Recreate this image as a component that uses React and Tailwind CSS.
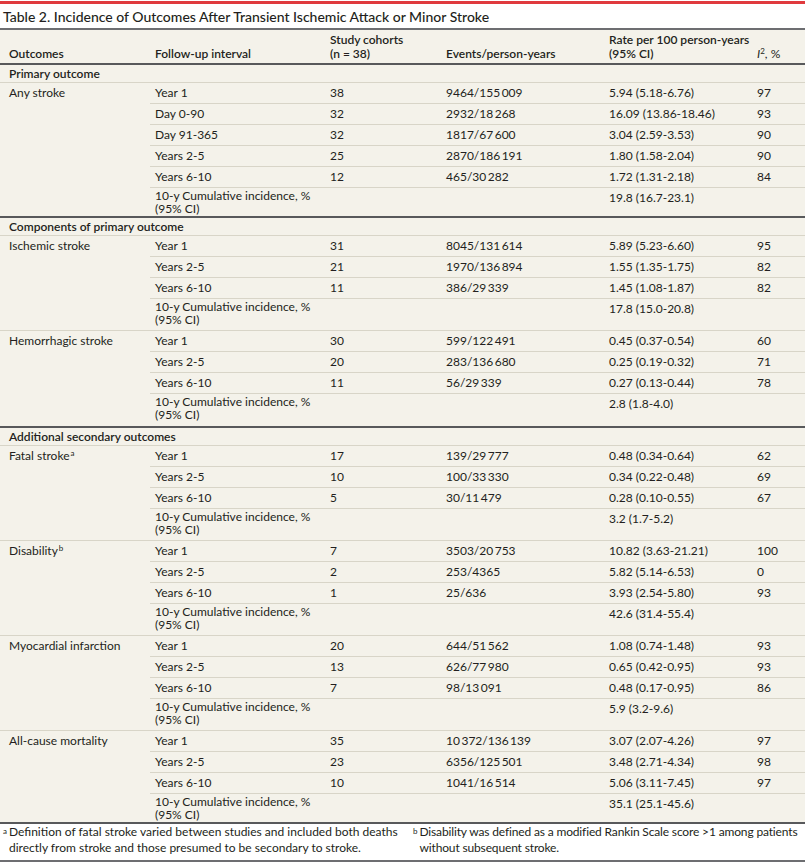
import React from "react";

const T = "\u2009";
const sections = [
  {
    title: "Primary outcome",
    groups: [
      {
        label: "Any stroke",
        cumH: "h-[28px]",
        rows: [
          ["Year 1", "38", `9464/155${T}009`, "5.94 (5.18-6.76)", "97"],
          ["Day 0-90", "32", `2932/18${T}268`, "16.09 (13.86-18.46)", "93"],
          ["Day 91-365", "32", `1817/67${T}600`, "3.04 (2.59-3.53)", "90"],
          ["Years 2-5", "25", `2870/186${T}191`, "1.80 (1.58-2.04)", "90"],
          ["Years 6-10", "12", `465/30${T}282`, "1.72 (1.31-2.18)", "84"],
        ],
        cum: "19.8 (16.7-23.1)",
      },
    ],
  },
  {
    title: "Components of primary outcome",
    groups: [
      {
        label: "Ischemic stroke",
        cumH: "h-[31px]",
        rows: [
          ["Year 1", "31", `8045/131${T}614`, "5.89 (5.23-6.60)", "95"],
          ["Years 2-5", "21", `1970/136${T}894`, "1.55 (1.35-1.75)", "82"],
          ["Years 6-10", "11", `386/29${T}339`, "1.45 (1.08-1.87)", "82"],
        ],
        cum: "17.8 (15.0-20.8)",
      },
      {
        label: "Hemorrhagic stroke",
        cumH: "h-[32px]",
        rows: [
          ["Year 1", "30", `599/122${T}491`, "0.45 (0.37-0.54)", "60"],
          ["Years 2-5", "20", `283/136${T}680`, "0.25 (0.19-0.32)", "71"],
          ["Years 6-10", "11", `56/29${T}339`, "0.27 (0.13-0.44)", "78"],
        ],
        cum: "2.8 (1.8-4.0)",
      },
    ],
  },
  {
    title: "Additional secondary outcomes",
    groups: [
      {
        label: "Fatal stroke",
        sup: "a",
        cumH: "h-[31px]",
        rows: [
          ["Year 1", "17", `139/29${T}777`, "0.48 (0.34-0.64)", "62"],
          ["Years 2-5", "10", `100/33${T}330`, "0.34 (0.22-0.48)", "69"],
          ["Years 6-10", "5", `30/11${T}479`, "0.28 (0.10-0.55)", "67"],
        ],
        cum: "3.2 (1.7-5.2)",
      },
      {
        label: "Disability",
        sup: "b",
        cumH: "h-[31px]",
        rows: [
          ["Year 1", "7", `3503/20${T}753`, "10.82 (3.63-21.21)", "100"],
          ["Years 2-5", "2", "253/4365", "5.82 (5.14-6.53)", "0"],
          ["Years 6-10", "1", "25/636", "3.93 (2.54-5.80)", "93"],
        ],
        cum: "42.6 (31.4-55.4)",
      },
      {
        label: "Myocardial infarction",
        cumH: "h-[31px]",
        rows: [
          ["Year 1", "20", `644/51${T}562`, "1.08 (0.74-1.48)", "93"],
          ["Years 2-5", "13", `626/77${T}980`, "0.65 (0.42-0.95)", "93"],
          ["Years 6-10", "7", `98/13${T}091`, "0.48 (0.17-0.95)", "86"],
        ],
        cum: "5.9 (3.2-9.6)",
      },
      {
        label: "All-cause mortality",
        cumH: "h-[28px]",
        rows: [
          ["Year 1", "35", `10${T}372/136${T}139`, "3.07 (2.07-4.26)", "97"],
          ["Years 2-5", "23", `6356/125${T}501`, "3.48 (2.71-4.34)", "98"],
          ["Years 6-10", "10", `1041/16${T}514`, "5.06 (3.11-7.45)", "97"],
        ],
        cum: "35.1 (25.1-45.6)",
      },
    ],
  },
];

function Cells({ r }) {
  return (
    <>
      <div className="w-[175px] pl-[5px]">{r[0]}</div>
      <div className="w-[116px] pl-[5px]">{r[1]}</div>
      <div className="w-[163px] pl-[5px]">{r[2]}</div>
      <div className="w-[148px] pl-[5px]">{r[3]}</div>
      <div className="w-[53px] pl-[5px]">{r[4]}</div>
    </>
  );
}

function Group({ g, last }) {
  return (
    <div className={"flex " + (last ? "" : "border-b border-[#d8d5c8]")}>
      <div className="w-[150px] pl-[9px] pt-[3px] leading-[14px]">
        {g.label}
        {g.sup && <sup className="text-[8px] ml-[1px]">{g.sup}</sup>}
      </div>
      <div className="flex flex-col">
        {g.rows.map((r, i) => (
          <div key={i} className="flex h-[21px] items-center border-b border-[#d8d5c8]">
            <Cells r={r} />
          </div>
        ))}
        <div className={"flex pt-[1px] leading-[13px] " + g.cumH}>
          <div className="w-[175px] pl-[5px]">
            10-y Cumulative incidence, %
            <br />
            (95% CI)
          </div>
          <div className="w-[116px]" />
          <div className="w-[163px]" />
          <div className="w-[148px] pl-[5px] pt-[2px]">{g.cum}</div>
          <div className="w-[53px]" />
        </div>
      </div>
    </div>
  );
}

export default function App() {
  return (
    <div className="w-[805px] font-['Lato',sans-serif] text-[12px] text-[#231f20] bg-white">
      <div className="h-[3px] bg-[#e03a3e] mt-[1px]" />
      <div className="h-[24px] flex items-center pl-[3px] text-[14px] font-medium">
        Table 2. Incidence of Outcomes After Transient Ischemic Attack or Minor Stroke
      </div>
      <div className="h-[2px] bg-[#6d6e71]" />
      <div className="bg-[#f4f2ea]">
        <div className="flex h-[35px] items-end pb-[2px] font-semibold leading-[14px] border-b-2 border-[#58595b]">
          <div className="w-[150px] pl-[9px]">Outcomes</div>
          <div className="w-[175px] pl-[5px]">Follow-up interval</div>
          <div className="w-[116px] pl-[5px]">
            Study cohorts
            <br />
            (n = 38)
          </div>
          <div className="w-[163px] pl-[5px]">Events/person-years</div>
          <div className="w-[148px] pl-[5px]">
            Rate per 100 person-years
            <br />
            (95% CI)
          </div>
          <div className="w-[53px] pl-[5px] font-normal">
            <span className="italic">I</span>
            <sup className="text-[8px]">2</sup>, %
          </div>
        </div>
        {sections.map((s, si) => (
          <div key={si} className="border-b-2 border-[#58595b]">
            <div className="h-[18px] flex items-center pl-[9px] font-semibold border-b border-[#d8d5c8]">
              {s.title}
            </div>
            {s.groups.map((g, gi) => (
              <Group key={gi} g={g} last={gi === s.groups.length - 1} />
            ))}
          </div>
        ))}
      </div>
      <div className="flex h-[38px] leading-[16px] border-b-2 border-[#6d6e71]">
        <div className="w-[410px] pl-[3px] flex">
          <span className="text-[8px] leading-none mt-[3px] mr-[2px]">a</span>
          <span className="whitespace-nowrap">
            Definition of fatal stroke varied between studies and included both deaths
            <br />
            directly from stroke and those presumed to be secondary to stroke.
          </span>
        </div>
        <div className="w-[395px] pl-[3px] flex">
          <span className="text-[8px] leading-none mt-[3px] mr-[2px]">b</span>
          <span className="whitespace-nowrap tracking-[-0.15px]">
            Disability was defined as a modified Rankin Scale score &gt;1 among patients
            <br />
            without subsequent stroke.
          </span>
        </div>
      </div>
    </div>
  );
}
